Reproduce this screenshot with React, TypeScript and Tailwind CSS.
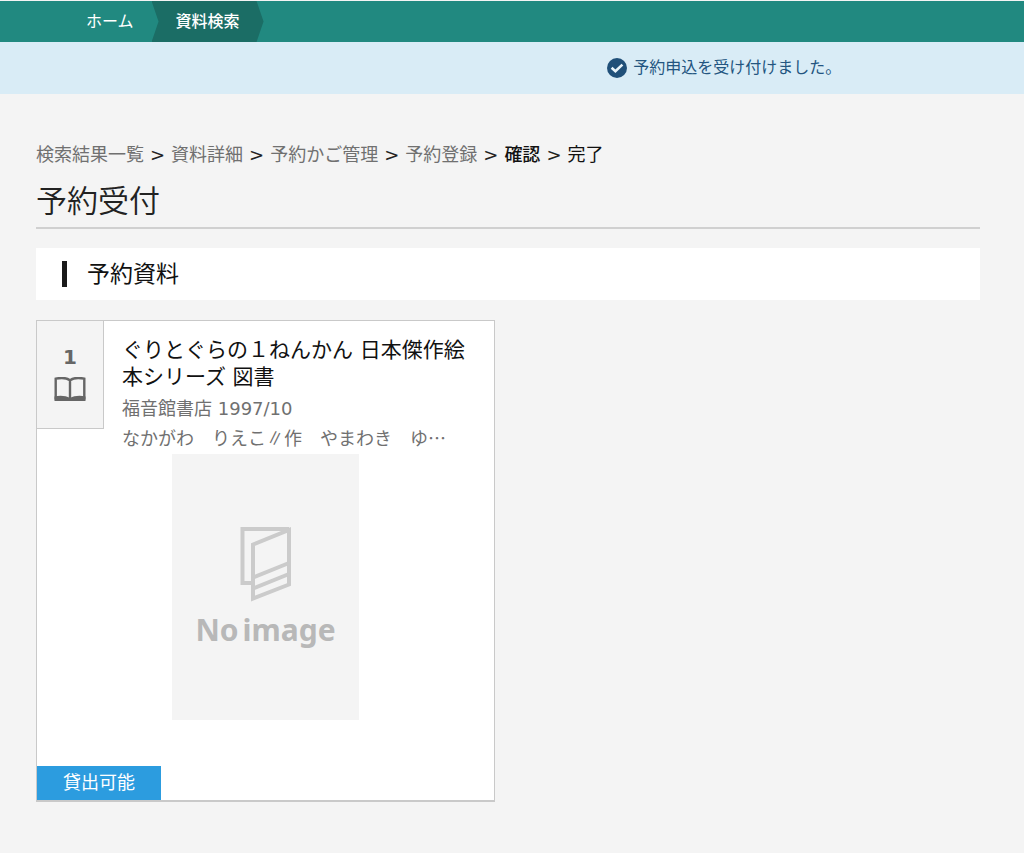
import React from 'react';

const previousSteps = ['検索結果一覧', '資料詳細', '予約かご管理', '予約登録'];

function Separator() {
  return (
    <span aria-hidden="true" className="px-1.5 text-[#222]">
      &gt;
    </span>
  );
}

function CheckIcon() {
  return (
    <svg viewBox="0 0 20 20" className="size-5" aria-hidden="true">
      <circle cx="10" cy="10" r="10" fill="#205079" />
      <path d="M4.600 9.800l3.800 3.400L15.400 6.600" fill="none" stroke="#e8f4fa" strokeWidth="2.6" />
    </svg>
  );
}

function BookIcon() {
  return (
    <svg viewBox="0 0 32 24" className="h-6 w-8" aria-label="図書" role="img">
      <path
        d="M16 3.2C12.5.8 6.5.6 1.700 1.700V22.600M16 3.200C19.500.8 25.500.6 30.300 1.700V22.600M16 3v19"
        fill="none"
        stroke="#666"
        strokeWidth="2.4"
      />
      <path d="M.5 19.400C6 18.200 12 18.600 16 21C20 18.600 26 18.200 31.500 19.400V24H.5Z" fill="#666" />
    </svg>
  );
}

function NoImage() {
  return (
    <div className="mx-auto mt-[3px] flex h-[266px] w-[187px] flex-col items-center bg-[#f4f4f4] pt-[72px]">
      <svg viewBox="0 0 52 76" className="h-[76px] w-[52px]" fill="none" stroke="#cbcbcb" strokeWidth="4" aria-hidden="true">
        <path d="M12 57H2.500V3H49" />
        <path d="M13 18.500L49 4V58.500L13 72.500Z" />
        <path d="M13 51.500L49 37M13 62.500L49 48" />
      </svg>
      <span className="mt-2.5 flex gap-1 font-['Noto_Sans','Open_Sans',sans-serif] text-[30px] leading-9 font-bold text-[#b8b8b8]">
        <span>No</span> <span>image</span>
      </span>
    </div>
  );
}

function BookCard() {
  return (
    <article className="flex flex-col border border-b-2 border-[#c9c9c9] bg-white">
      <div className="flex items-start">
        <div className="flex h-[108px] w-[67px] shrink-0 flex-col items-center border-r border-b border-[#c9c9c9] bg-[#f4f4f4] pt-[22px] text-[#666]">
          <span className="text-xl leading-7 font-bold">1</span>
          <div className="mt-1.5">
            <BookIcon />
          </div>
        </div>
        <div className="min-w-0 flex-1 pt-4 pr-5 pl-[18px]">
          <h3 className="text-[21px] leading-[27px] text-[#111]">ぐりとぐらの１ねんかん 日本傑作絵本シリーズ 図書</h3>
          <p className="mt-1 text-lg leading-7 text-[#707070]">福音館書店 1997/10</p>
          <p className="font-['Noto_Sans_CJK_JP',sans-serif] text-lg leading-7 text-[#707070]">
            なかがわ　りえこ∥作　やまわき　ゆ…
          </p>
        </div>
      </div>
      <NoImage />
      <span className="mt-[46px] self-start bg-[#2c9cdf] px-[26px] text-lg leading-[34px] text-white">貸出可能</span>
    </article>
  );
}

export default function App() {
  return (
    <div
      lang="ja"
      className="min-h-screen bg-[#f4f4f4] pt-px font-['DejaVu_Sans','Noto_Sans_CJK_JP',sans-serif] text-[#222]"
    >
      <nav className="flex h-[41px] bg-[#218980] pl-[62px] text-base leading-[42px] text-white">
        <a href="#home" className="px-6">
          ホーム
        </a>
        <a
          href="#search"
          className="-ml-1.5 bg-[#1b6d65] px-6 font-medium [clip-path:polygon(0_0,calc(100%-7px)_0,100%_50%,calc(100%-7px)_100%,0_100%,7px_50%)]"
        >
          資料検索
        </a>
      </nav>
      <div role="status" className="flex h-[52px] items-center gap-1.5 bg-[#d9ecf6] pl-[59.3%] text-base text-[#235580]">
        <CheckIcon />
        <span>予約申込を受け付けました。</span>
      </div>
      <main className="pt-[47px] pr-11 pb-12 pl-9">
        <nav aria-label="手順" className="text-lg leading-7">
          {previousSteps.map((step) => (
            <React.Fragment key={step}>
              <a href="#step" className="text-[#707070]">
                {step}
              </a>
              <Separator />
            </React.Fragment>
          ))}
          <span className="font-medium text-[#111]">確認</span>
          <Separator />
          <span className="text-[#111]">完了</span>
        </nav>
        <h1 className="mt-2 border-b-2 border-[#d0d0d0] pb-0.5 text-[31px] leading-[48px] font-[350]">予約受付</h1>
        <h2 className="mt-[19px] flex h-[52px] items-center gap-5 bg-white pl-[26px] text-[23px] text-[#111]">
          <span aria-hidden="true" className="h-[26px] w-[5px] bg-[#1a1a1a]" />
          予約資料
        </h2>
        <div className="mt-5 grid grid-cols-2 gap-[26px]">
          <BookCard />
        </div>
      </main>
    </div>
  );
}
